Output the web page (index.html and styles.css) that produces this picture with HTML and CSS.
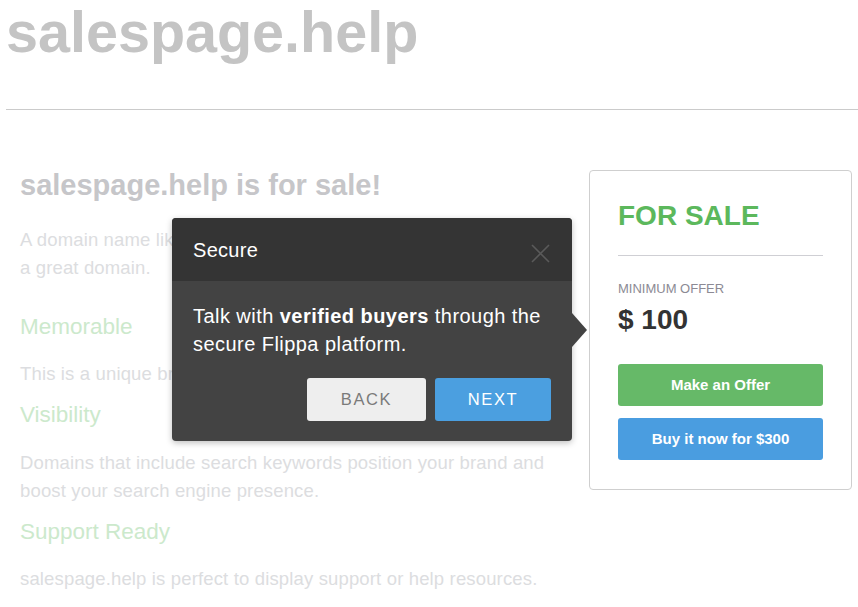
FILE: index.html
```html
<!DOCTYPE html>
<html lang="en">
<head>
<meta charset="utf-8">
<title>salespage.help</title>
<link rel="stylesheet" href="styles.css">
</head>
<body>
<header class="site-header">
  <h1 class="site-title">salespage.help</h1>
</header>
<main class="main">
  <section class="content">
    <h2 class="page-title">salespage.help is for sale!</h2>
    <p class="text intro">A domain name like salespage.help means your business has<br>a great domain.</p>
    <h3 class="feature">Memorable</h3>
    <p class="text">This is a unique brandable name that is easy to remember.</p>
    <h3 class="feature">Visibility</h3>
    <p class="text">Domains that include search keywords position your brand and boost your search engine presence.</p>
    <h3 class="feature">Support Ready</h3>
    <p class="text">salespage.help is perfect to display support or help resources.</p>
  </section>
  <aside class="card">
    <div class="card-title">FOR SALE</div>
    <div class="card-rule"></div>
    <div class="card-label">MINIMUM OFFER</div>
    <div class="card-price">$ 100</div>
    <button class="btn btn-green">Make an Offer</button>
    <button class="btn btn-blue">Buy it now for $300</button>
  </aside>
</main>
<div class="tour">
  <div class="tour-head">
    <span class="tour-title">Secure</span>
    <svg class="tour-close" width="19" height="19" viewBox="0 0 19 19"><path d="M1 1L18 18M18 1L1 18" stroke="#5a5a5a" stroke-width="1.6" fill="none"/></svg>
  </div>
  <div class="tour-body">
    <p class="tour-text">Talk with <b>verified buyers</b> through the secure Flippa platform.</p>
    <div class="tour-actions">
      <button class="tour-btn tour-back">BACK</button>
      <button class="tour-btn tour-next">NEXT</button>
    </div>
  </div>
  <span class="tour-arrow"></span>
</div>
</body>
</html>
```
FILE: styles.css
```css
html, body {
  margin: 0;
  padding: 0;
  background: #fff;
}
body {
  font-family: "Liberation Sans", Arial, sans-serif;
  width: 858px;
  height: 607px;
  overflow: hidden;
  position: relative;
}
.site-header {
  margin-left: 6px;
  height: 110px;
  border-bottom: 1px solid #cbcbcb;
  box-sizing: border-box;
  padding-top: 1px;
}
.site-title {
  margin: 0;
  font-size: 57.5px;
  line-height: 1.1;
  font-weight: bold;
  color: #c4c4c4;
}
.main {
  display: flex;
  gap: 19px;
  padding: 60px 6px 0 20px;
  align-items: flex-start;
}
.content {
  flex: 0 0 550px;
}
.page-title {
  margin: 0 0 25px;
  font-size: 29px;
  line-height: 1.06;
  font-weight: bold;
  color: #c6c6c9;
}
.text {
  margin: 0 0 15.5px;
  font-size: 18.5px;
  line-height: 28px;
  letter-spacing: 0.15px;
  color: #dcdde0;
}
.text.intro {
  margin-bottom: 33px;
}
.feature {
  margin: 0 0 20.5px;
  font-size: 22.5px;
  line-height: 1.1;
  font-weight: normal;
  color: #cce9cc;
}
.card {
  flex: 0 0 263px;
  box-sizing: border-box;
  border: 1px solid #cfcfcf;
  border-radius: 4px;
  padding: 30px 28px 29px;
  display: flex;
  flex-direction: column;
}
.card-title {
  font-size: 28px;
  line-height: 1.1;
  font-weight: bold;
  color: #5cb85c;
}
.card-rule {
  height: 1px;
  background: #cfcfd4;
  margin: 23px 0 24px;
}
.card-label {
  font-size: 13px;
  line-height: 18px;
  color: #8c8a94;
}
.card-price {
  margin-top: 7px;
  font-size: 28px;
  line-height: 1.1;
  font-weight: bold;
  color: #333;
}
.btn {
  height: 42px;
  border: none;
  border-radius: 3px;
  font-family: "Liberation Sans", Arial, sans-serif;
  font-size: 15px;
  font-weight: bold;
  color: #fff;
  padding: 0;
}
.btn-green {
  margin-top: 28px;
  background: #66b968;
}
.btn-blue {
  margin-top: 12px;
  background: #4a9de0;
}
.tour {
  position: absolute;
  left: 172px;
  top: 218px;
  width: 400px;
  border-radius: 4px;
  background: #434343;
  box-shadow: 0 2px 6px rgba(0, 0, 0, 0.25);
}
.tour-head {
  height: 63px;
  background: #343434;
  border-radius: 4px 4px 0 0;
  display: flex;
  align-items: center;
  justify-content: space-between;
  padding: 0 22px 0 21px;
}
.tour-title {
  font-size: 20px;
  line-height: 24px;
  letter-spacing: 0.3px;
  color: #fff;
}
.tour-close {
  display: block;
  margin-top: 8px;
}
.tour-body {
  padding: 21px 21px 20px;
}
.tour-text {
  margin: 0;
  font-size: 20px;
  line-height: 28px;
  letter-spacing: 0.45px;
  color: #fff;
}
.tour-text b {
  font-weight: bold;
}
.tour-actions {
  display: flex;
  justify-content: flex-end;
  gap: 9px;
  margin-top: 20px;
}
.tour-btn {
  height: 43px;
  border: none;
  border-radius: 3px;
  font-family: "Liberation Sans", Arial, sans-serif;
  font-size: 16.5px;
  letter-spacing: 1.6px;
  padding: 0;
}
.tour-back {
  width: 119px;
  background: #eeeeee;
  color: #7a7a7a;
}
.tour-next {
  width: 116px;
  background: #4b9fe0;
  color: #fff;
}
.tour-arrow {
  position: absolute;
  right: -15px;
  top: 50%;
  margin-top: -17px;
  width: 0;
  height: 0;
  border-top: 17px solid transparent;
  border-bottom: 17px solid transparent;
  border-left: 15px solid #434343;
}
```
